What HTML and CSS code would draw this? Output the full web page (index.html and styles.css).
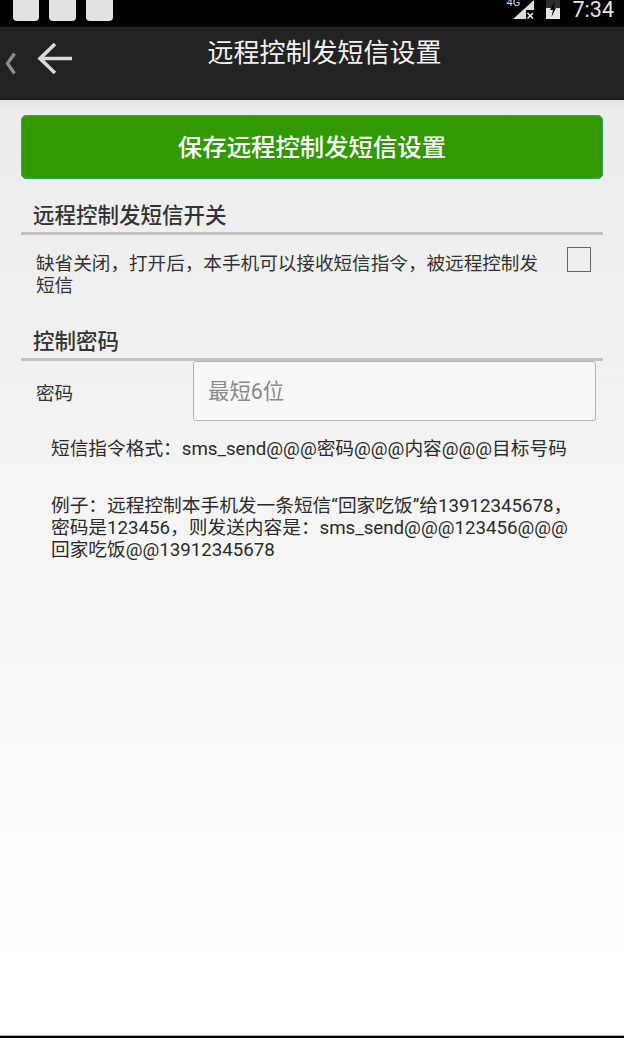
FILE: index.html
```html
<!DOCTYPE html>
<html lang="zh">
<head>
<meta charset="utf-8">
<title>远程控制发短信设置</title>
<link rel="stylesheet" href="styles.css">
</head>
<body>
<div class="app">
  <div class="status">
    <div class="notes"><span class="note"></span><span class="note"></span><span class="note"></span></div>
    <div class="sys">
      <span class="signal">
        <span class="lte">4G</span>
        <svg width="22" height="20" viewBox="0 0 22 20"><path d="M0 19 L21 0 V10 H13 V19 Z" fill="#dcdcdc"/><path d="M14.500 13 L20 18.500 M20 13 L14.500 18.500" stroke="#e8e8e8" stroke-width="1.700" fill="none"/></svg>
      </span>
      <svg class="batt" width="14" height="19" viewBox="0 0 14 19"><path d="M0 0H14V19H0Z" fill="#e6e6e6"/><path d="M0 0H14V8H0Z" fill="#2e2e2e"/><path d="M9 1 L4 10 H7 L5.500 17 L10 8 H7.500 Z" fill="#000"/></svg>
      <span class="clock">7:34</span>
    </div>
  </div>
  <header class="bar">
    <svg class="chev" width="12" height="24" viewBox="0 0 12 24"><path d="M10.500 1.500 L3.500 11.500 L10.500 21.500" fill="none" stroke="#8c8c8c" stroke-width="3.400"/></svg>
    <svg class="back" width="38" height="34" viewBox="0 0 38 34"><path d="M36 16.500H4 M19 2 L4 16.500 L19 31" fill="none" stroke="#dadada" stroke-width="3.600"/></svg>
    <h1 class="title">远程控制发短信设置</h1>
  </header>
  <main class="content">
    <button class="save" type="button">保存远程控制发短信设置</button>
    <h2 class="section first">远程控制发短信开关</h2>
    <div class="toggle">
      <p class="toggle-text">缺省关闭，打开后，本手机可以接收短信指令，被远程控制发短信</p>
      <span class="check"></span>
    </div>
    <h2 class="section second">控制密码</h2>
    <div class="pw">
      <span class="pw-label">密码</span>
      <input class="pw-input" type="text" placeholder="最短6位">
    </div>
    <p class="note-text format">短信指令格式：sms_send@@@密码@@@内容@@@目标号码</p>
    <p class="note-text example">例子：远程控制本手机发一条短信“回家吃饭”给13912345678，密码是123456，则发送内容是：sms_send@@@123456@@@回家吃饭@@13912345678</p>
  </main>
  <div class="foot"></div>
</div>
</body>
</html>
```
FILE: styles.css
```css
* { box-sizing: border-box; }
html, body { margin: 0; padding: 0; height: 100%; }
body { font-family: Roboto, "Noto Sans CJK SC", sans-serif; overflow: hidden; }
.app { width: 624px; height: 1038px; display: flex; flex-direction: column; }

.status { height: 27px; flex: none; background: #000; display: flex; justify-content: space-between; overflow: hidden; }
.notes { display: flex; gap: 10.300px; padding-left: 12.500px; align-items: flex-end; height: 21px; }
.note { width: 26.500px; height: 30px; background: #e2e2e2; border-radius: 4px; flex: none; }
.sys { display: flex; align-items: flex-start; padding-right: 10px; }
.signal { display: flex; width: 30px; height: 27px; margin-right: 20px; position: relative; }
.signal svg { position: absolute; left: 17px; top: 0; }
.lte { position: absolute; left: 11px; top: -3px; font-size: 11px; line-height: 12px; color: #ddd; }
.batt { margin: 0 13px 0 0; }
.clock { color: #e4e4e4; font-size: 21.500px; line-height: 20px; }

.bar { height: 73px; flex: none; background: #222; border-top: 1px solid #2c2c2c; border-bottom: 3px solid #1e1e1e; display: flex; align-items: flex-start; position: relative; }
.chev { margin: 24px 0 0 4px; flex: none; }
.back { margin: 14px 0 0 20px; flex: none; }
.title { position: absolute; left: 25px; right: 0; top: 8px; margin: 0; text-align: center; font-size: 26px; line-height: 34px; font-weight: 400; color: #f2f2f2; }

.content { flex: 1; padding: 15px 21px 0; background: linear-gradient(#e6e6e6 0, #ececec 12px, #f2f2f2 300px, #fefefe 800px, #fff 100%); }
.save { display: block; width: 100%; height: 64px; margin: 0; padding: 1px 0 0; background: #319a00; border: 1px solid #3aa07a; border-radius: 5px; color: #fff; font: 500 24.400px/62px Roboto, "Noto Sans CJK SC", sans-serif; text-align: center; }

.section { margin: 0; padding: 0 0 0 12px; font-size: 21.500px; font-weight: 500; line-height: 28px; color: #333; border-bottom: 3px solid #c4c4c4; }
.section.first { margin-top: 23px; height: 33px; }
.section.second { margin-top: 29px; height: 33px; }

.toggle { display: flex; justify-content: space-between; padding: 12px 12px 0 15px; height: 64px; }
.toggle-text { margin: 6px 0 0; width: 510px; font-size: 18.600px; line-height: 22px; color: #333; }
.check { width: 24px; height: 25px; border: 1px solid #666; flex: none; }

.pw { display: flex; align-items: center; height: 60px; padding-left: 15px; }
.pw-label { width: 157px; padding-top: 1px; font-size: 18.600px; color: #333; flex: none; }
.pw-input { width: 403px; height: 60px; margin-right: 7px; padding: 0 14px; background: #f7f7f7; border: 1px solid #b4b4b4; border-radius: 3px; font: 21.400px Roboto, "Noto Sans CJK SC", sans-serif; color: #333; outline: 0; }
.pw-input::placeholder { color: #8a8a8a; opacity: 1; }

.note-text { margin: 0; padding: 0 26px 0 30px; font-size: 18.700px; line-height: 22px; color: #2b2b2b; word-break: break-all; }
.format { margin-top: 17px; }
.example { margin-top: 35px; }

.foot { height: 3px; flex: none; background: #000; border-top: 1px solid #aaa; }
```
